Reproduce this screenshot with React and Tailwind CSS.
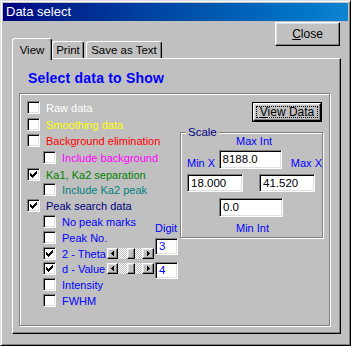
import React from 'react';

// classic win9x bevels
const raised =
  'border border-t-white border-l-white border-r-black border-b-black shadow-[inset_-1px_-1px_0_#808080,inset_1px_1px_0_#dfdfdf]';
const sunken =
  'border border-t-[#808080] border-l-[#808080] border-r-white border-b-white shadow-[inset_1px_1px_0_#000,inset_-1px_-1px_0_#dfdfdf]';
const etched = 'border border-[#808080] shadow-[1px_1px_0_#fff,inset_1px_1px_0_#fff]';

const rows = [
  { label: 'Raw data', color: 'text-white', h: 'h-[17px]' },
  { label: 'Smoothing data', color: 'text-[#ffff00]', h: 'h-[16px]' },
  { label: 'Background elimination', color: 'text-[#ff0000]', h: 'h-[17px]' },
  { label: 'Include background', color: 'text-[#ff00ff]', h: 'h-[17px]', indent: true },
  { label: 'Ka1, Ka2 separation', color: 'text-[#008000]', h: 'h-[16px]', checked: true },
  { label: 'Include Ka2 peak', color: 'text-[#008080]', h: 'h-[15px]', indent: true },
  { label: 'Peak search data', color: 'text-[#000080]', h: 'h-[16px]', checked: true },
  { label: 'No peak marks', color: 'text-[#0000ff]', h: 'h-[16px]', indent: true },
  { label: 'Peak No.', color: 'text-[#0000ff]', h: 'h-[16px]', indent: true },
  { label: '2 - Theta', color: 'text-[#0000ff]', h: 'h-[16px]', indent: true, checked: true, spin: true },
  { label: 'd - Value', color: 'text-[#0000ff]', h: 'h-[15px]', indent: true, checked: true, spin: true },
  { label: 'Intensity', color: 'text-[#0000ff]', h: 'h-[16px]', indent: true },
  { label: 'FWHM', color: 'text-[#0000ff]', h: 'h-[16px]', indent: true },
];

function CheckBox({ checked }) {
  return (
    <span className={`w-[13px] h-[13px] shrink-0 bg-white flex items-center justify-center ${sunken}`}>
      {checked && (
        <svg width="7" height="7" viewBox="0 0 7 7" shapeRendering="crispEdges">
          <rect x="6" y="0" width="1" height="1" fill="#000" />
          <rect x="5" y="1" width="2" height="1" fill="#000" />
          <rect x="0" y="2" width="1" height="1" fill="#000" />
          <rect x="4" y="2" width="3" height="1" fill="#000" />
          <rect x="0" y="3" width="2" height="1" fill="#000" />
          <rect x="3" y="3" width="3" height="1" fill="#000" />
          <rect x="0" y="4" width="5" height="1" fill="#000" />
          <rect x="1" y="5" width="3" height="1" fill="#000" />
          <rect x="2" y="6" width="1" height="1" fill="#000" />
        </svg>
      )}
    </span>
  );
}

function ArrowButton({ right, w }) {
  return (
    <div className={`${w} h-full bg-[#c0c0c0] flex items-center justify-center ${raised}`}>
      <svg width="3" height="5" viewBox="0 0 3 5" shapeRendering="crispEdges">
        {right ? <path d="M0 0h1v5H0zM1 1h1v3H1zM2 2h1v1H2z" fill="#000" /> : <path d="M2 0h1v5H2zM1 1h1v3H1zM0 2h1v1H0z" fill="#000" />}
      </svg>
    </div>
  );
}

function Spinner() {
  return (
    <div className="flex h-[11px] w-[47px] shrink-0">
      <ArrowButton w="w-[11px]" />
      <div className="w-[24px] h-full pl-[9px] bg-[repeating-conic-gradient(#ffffff_0%_25%,#c0c0c0_0%_50%)] bg-[length:2px_2px]">
        <div className={`w-[8px] h-full bg-[#c0c0c0] ${raised}`} />
      </div>
      <ArrowButton right w="w-[12px]" />
    </div>
  );
}

function TextBox({ value, className, text = 'text-black' }) {
  return (
    <div className={`bg-white flex items-center pl-[3px] text-[11.5px] leading-[13px] ${text} ${sunken} ${className}`}>
      {value}
    </div>
  );
}

function ScaleGroup() {
  return (
    <div className={`relative mt-[10px] w-[143px] h-[106px] flex flex-col whitespace-nowrap ${etched}`}>
      <span className="absolute left-[5px] -top-[7px] px-[2px] bg-[#c0c0c0] text-[#000080] text-[11.5px] leading-[13px]">
        Scale
      </span>
      <div className="mt-[2px] pl-[55px] text-[#0000ff] text-[11px] leading-[13px]">Max Int</div>
      <div className="mt-[2px] flex items-end pl-[6px]">
        <span className="w-[32px] mb-[-1px] text-[#0000ff] text-[11px] leading-[13px]">Min X</span>
        <TextBox value="8188.0" className="w-[64px] h-[19px]" />
        <span className="ml-[9px] mb-[-1px] text-[#0000ff] text-[11px] leading-[13px]">Max X</span>
      </div>
      <div className="mt-[5px] flex pl-[6px]">
        <TextBox value="18.000" className="w-[56px] h-[18px]" />
        <TextBox value="41.520" className="ml-[16px] w-[56px] h-[18px]" />
      </div>
      <div className="mt-[6px] pl-[38px]">
        <TextBox value="0.0" className="w-[64px] h-[19px]" />
      </div>
      <div className="mt-[5px] pl-[55px] text-[#0000ff] text-[11px] leading-[13px]">Min Int</div>
    </div>
  );
}

export default function App() {
  return (
    <div className="w-[351px] h-[346px] bg-[#c0c0c0] p-[2px] flex flex-col border border-t-[#dfdfdf] border-l-[#dfdfdf] border-r-black border-b-black shadow-[inset_1px_1px_0_#fff,inset_-1px_-1px_0_#808080] font-['Liberation_Sans',Arial,sans-serif] text-black select-none">
      <div className="h-[18px] shrink-0 bg-linear-to-r from-[#000080] to-[#1084d0] flex items-center pl-[3px] text-white text-[13px]">
        Data select
      </div>

      <div className="h-[37px] shrink-0 flex items-end justify-between">
        <div className="relative z-10 flex items-end ml-[9px]">
          <div className="w-[40px] h-[22px] -mb-[2px] bg-[#c0c0c0] border-t border-l border-r border-t-white border-l-white border-r-black rounded-t-[3px] shadow-[inset_-1px_0_0_#808080] pt-[5px] text-center text-[11.5px] leading-[13px]">
            View
          </div>
          <div className="w-[32px] h-[17px] bg-[#c0c0c0] border-t border-l border-r border-t-white border-l-white border-r-black rounded-t-[3px] shadow-[inset_-1px_0_0_#808080] pt-[2px] text-center text-[11.5px] leading-[13px]">
            Print
          </div>
          <div className="ml-[2px] w-[76px] h-[17px] bg-[#c0c0c0] border-t border-l border-r border-t-white border-l-white border-r-black rounded-t-[3px] shadow-[inset_-1px_0_0_#808080] pt-[2px] text-center text-[11.5px] leading-[13px] whitespace-nowrap">
            Save as Text
          </div>
        </div>
        <button className={`self-start mt-[1px] mr-[8px] w-[65px] h-[24px] bg-[#c0c0c0] flex items-center justify-center text-[12px] ${raised}`}>
          <span>
            <span className="underline">C</span>lose
          </span>
        </button>
      </div>

      <div className="ml-[9px] w-[329px] h-[276px] shrink-0 flex flex-col border border-t-white border-l-white border-r-black border-b-black shadow-[inset_-1px_-1px_0_#808080]">
        <div className="mt-[11px] pl-[15px] h-[16px] text-[#0000ff] text-[14px] leading-[16px] font-bold tracking-[0.2px] whitespace-nowrap">
          Select data to Show
        </div>

        <div className={`mt-[7px] ml-[6px] w-[311px] h-[233px] flex ${etched}`}>
          <div className="w-[135px] pl-[7px] pt-[5px] flex flex-col">
            {rows.map((r) => (
              <div key={r.label} className={`${r.h} flex items-center ${r.indent ? 'pl-[16px]' : ''}`}>
                <CheckBox checked={r.checked} />
                <span
                  className={`ml-[6px] pt-[2px] whitespace-nowrap text-[11px] leading-[13px] ${r.color} ${r.spin ? 'w-[45px]' : ''}`}
                >
                  {r.label}
                </span>
                {r.spin && <Spinner />}
              </div>
            ))}
          </div>

          <div className="w-[23px] flex flex-col">
            <div className="mt-[127px] text-[#0000ff] text-[11px] leading-[14px]">Digit</div>
            <TextBox value="3" text="text-[#0000ff]" className="mt-[3px] w-[23px] h-[17px]" />
            <TextBox value="4" text="text-[#0000ff]" className="mt-[7px] w-[23px] h-[17px]" />
          </div>

          <div className="ml-[2px] w-[143px] flex flex-col">
            <button className="ml-[72px] mt-[8px] w-[70px] h-[20px] border border-black bg-[#c0c0c0] p-0">
              <div className={`w-full h-full p-[2px] ${raised}`}>
                <div className="w-full h-full border border-dotted border-black flex items-center justify-center text-[12px] leading-[12px] whitespace-nowrap">
                  <span>
                    <span className="underline">V</span>iew Data
                  </span>
                </div>
              </div>
            </button>
            <ScaleGroup />
          </div>
        </div>
      </div>
    </div>
  );
}
